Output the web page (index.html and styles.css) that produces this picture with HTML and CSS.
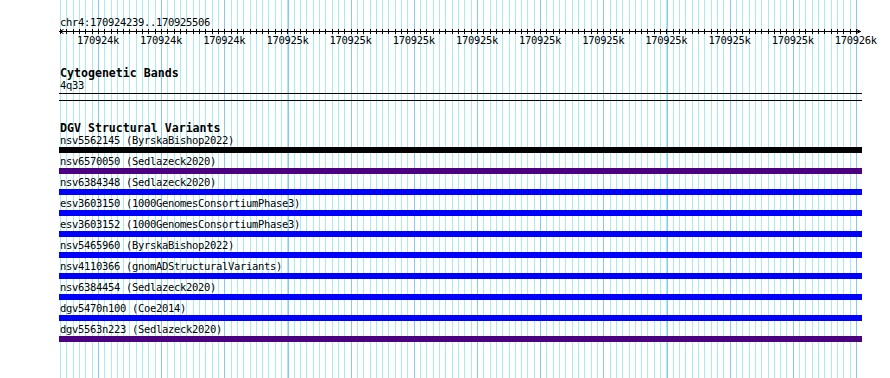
FILE: index.html
```html
<!doctype html>
<html lang="en">
  <head>
    <meta charset="UTF-8" />
    <meta name="viewport" content="width=device-width, initial-scale=1.0" />
    <title>chr4:170924239..170925506</title>
    <link rel="stylesheet" href="styles.css">
  </head>
  <body>
    <div class="view">
      <div class="ruler">
        <div class="locus">chr4:170924239..170925506</div>
        <svg class="axis" width="803" height="7" viewBox="0 0 803 7">
          <path d="M0 3.5H801.5" />
          <path d="M4.5 1.5L0.5 3.5L4.5 5.5M797.5 1.5L801.5 3.5L797.5 5.5" />
        </svg>
        <div class="scale">
          <span>170924k</span>
          <span>170924k</span>
          <span>170924k</span>
          <span>170925k</span>
          <span>170925k</span>
          <span>170925k</span>
          <span>170925k</span>
          <span>170925k</span>
          <span>170925k</span>
          <span>170925k</span>
          <span>170925k</span>
          <span>170925k</span>
          <span>170926k</span>
        </div>
      </div>

      <div class="track bands">
        <h3>Cytogenetic Bands</h3>
        <div class="band">4q33</div>
      </div>

      <div class="track variants">
        <h3>DGV Structural Variants</h3>
        <div class="features">
          <div class="feature">
            <div class="name">nsv5562145 (ByrskaBishop2022)</div>
            <div class="bar black"></div>
          </div>
          <div class="feature">
            <div class="name">nsv6570050 (Sedlazeck2020)</div>
            <div class="bar indigo"></div>
          </div>
          <div class="feature">
            <div class="name">nsv6384348 (Sedlazeck2020)</div>
            <div class="bar blue"></div>
          </div>
          <div class="feature">
            <div class="name">esv3603150 (1000GenomesConsortiumPhase3)</div>
            <div class="bar blue"></div>
          </div>
          <div class="feature">
            <div class="name">esv3603152 (1000GenomesConsortiumPhase3)</div>
            <div class="bar blue"></div>
          </div>
          <div class="feature">
            <div class="name">nsv5465960 (ByrskaBishop2022)</div>
            <div class="bar blue"></div>
          </div>
          <div class="feature">
            <div class="name">nsv4110366 (gnomADStructuralVariants)</div>
            <div class="bar blue"></div>
          </div>
          <div class="feature">
            <div class="name">nsv6384454 (Sedlazeck2020)</div>
            <div class="bar blue"></div>
          </div>
          <div class="feature">
            <div class="name">dgv5470n100 (Coe2014)</div>
            <div class="bar blue"></div>
          </div>
          <div class="feature">
            <div class="name">dgv5563n223 (Sedlazeck2020)</div>
            <div class="bar indigo"></div>
          </div>
        </div>
      </div>
    </div>
  </body>
</html>
```

FILE: styles.css
```css
body {
  margin: 0;
  background-color: #fff;
  color: #000;
  font-family: "DejaVu Sans Mono", monospace;
  font-size: 10.5px;
  letter-spacing: -0.32px;
}

/* grid: minor line every 6.317px, major every 63.17px */
.view {
  margin-left: 59px;
  width: 803px;
  min-height: 100vh;
  background:
    repeating-linear-gradient(90deg, #87c8ee 0 1px, transparent 1px 63.17px) 39px 0 / 759px 100% no-repeat,
    repeating-linear-gradient(90deg, #a8ecf0 0 1px, transparent 1px 6.317px) 1px 0 / 797px 100% no-repeat;
}

.locus {
  padding-top: 17px;
  padding-left: 1px;
  line-height: 11px;
}

.axis {
  display: block;
  background: repeating-linear-gradient(90deg, #000 0 1px, transparent 1px 6.317px) 1px 1px / 797px 5px no-repeat;
}

.axis path {
  fill: none;
  stroke: #000;
  stroke-width: 1;
}

.scale {
  display: grid;
  grid-template-columns: repeat(13, 63.17px);
  margin-left: 7.4px;
  line-height: 11px;
  text-align: center;
  white-space: nowrap;
}

h3 {
  margin: 0;
  padding-left: 1px;
  font-size: 11.6px;
  line-height: 12px;
  font-weight: bold;
  letter-spacing: 0;
}

.bands {
  margin-top: 21px;
  padding-bottom: 2px;
  border-bottom: 1px solid #000;
}

.bands h3 {
  margin-bottom: 1px;
}

.band {
  padding-left: 1px;
  line-height: 11px;
}

.variants {
  margin-top: 6px;
  padding-top: 21px;
  border-top: 1px solid #000;
}

.features {
  margin-top: 1px;
}

.feature .name {
  padding-left: 1px;
  line-height: 11px;
  white-space: nowrap;
}

.bar {
  height: 6px;
  margin-top: 1px;
  margin-bottom: 3px;
}

.black {
  background-color: #000;
}

.indigo {
  background-color: #4b0082;
}

.blue {
  background-color: #0000ff;
}
```
